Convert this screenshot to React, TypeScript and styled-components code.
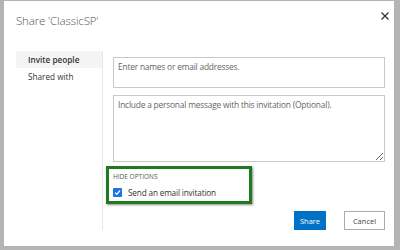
import React, { useState } from "react";
import styled, { createGlobalStyle } from "styled-components";

const GlobalStyle = createGlobalStyle`
  html, body {
    margin: 0;
    padding: 0;
    background: #b4b4b4;
    font-family: "Open Sans", "Liberation Sans", sans-serif;
  }
`;

const Page = styled.div`
  width: 400px;
  height: 250px;
  padding: 1px 7px 4px 4px;
  box-sizing: border-box;
  display: flex;
`;

const Dialog = styled.div`
  flex: 1;
  background: #fff;
  display: flex;
  flex-direction: column;
  padding: 0 9px 0 12px;
`;

const Header = styled.div`
  display: flex;
  align-items: center;
  justify-content: space-between;
  height: 38px;
  margin-right: -6px;
`;

const Title = styled.h1`
  margin: 0;
  font-size: 11.5px;
  font-weight: 300;
  color: #555;
  letter-spacing: -0.15px;
`;

const CloseButton = styled.button`
  border: none;
  background: none;
  padding: 0;
  width: 12px;
  height: 12px;
  display: flex;
  align-items: center;
  justify-content: center;
  cursor: pointer;
  margin-top: -8px;
`;

const Body = styled.div`
  display: flex;
  margin-top: 12px;
  height: 179px;
`;

const Nav = styled.nav`
  width: 86px;
  border-right: 1px solid #e6e6e6;
  display: flex;
  flex-direction: column;
`;

const NavItem = styled.div<{ $active?: boolean }>`
  height: 17px;
  display: flex;
  align-items: center;
  padding-left: 12px;
  font-size: 8.2px;
  color: #333;
  font-weight: ${({ $active }) => ($active ? 600 : 400)};
  background: ${({ $active }) => ($active ? "#f4f4f4" : "transparent")};
`;

const Content = styled.div`
  flex: 1;
  padding: 6px 0 0 10px;
  display: flex;
  flex-direction: column;
`;

const NamesInput = styled.input`
  box-sizing: border-box;
  width: 272px;
  height: 31px;
  border: 1px solid #c8c8c8;
  padding: 0 0 13px 4px;
  font-family: inherit;
  font-size: 8.4px;
  letter-spacing: -0.2px;
  color: #333;
  outline: none;
  &::placeholder {
    color: #666;
  }
`;

const Message = styled.textarea`
  box-sizing: border-box;
  width: 272px;
  height: 67px;
  margin-top: 7px;
  border: 1px solid #c8c8c8;
  padding: 3px 4px;
  font-family: inherit;
  font-size: 8.4px;
  letter-spacing: -0.2px;
  color: #333;
  resize: vertical;
  outline: none;
  &::placeholder {
    color: #666;
  }
`;

const Options = styled.div`
  width: 146px;
  height: 38px;
  box-sizing: border-box;
  margin: 4px 0 0 -7px;
  border: 3px solid #1f7a1f;
  box-shadow: 1px 1px 2px rgba(0, 0, 0, 0.45);
  padding: 3px 0 0 4px;
  display: flex;
  flex-direction: column;
`;

const OptionsToggle = styled.div`
  font-size: 6.5px;
  color: #555;
  text-transform: uppercase;
  height: 10px;
  line-height: 10px;
`;

const CheckRow = styled.label`
  display: flex;
  align-items: center;
  gap: 6px;
  margin-top: 5px;
  font-size: 8.2px;
  letter-spacing: -0.15px;
  color: #333;
`;

const Box = styled.span`
  width: 9px;
  height: 9px;
  border-radius: 1px;
  background: #1a73e8;
  display: flex;
  align-items: center;
  justify-content: center;
`;

const Footer = styled.div`
  margin-top: auto;
  display: flex;
  justify-content: flex-end;
  gap: 18px;
  height: 19px;
`;

const Button = styled.button<{ $primary?: boolean }>`
  height: 19px;
  box-sizing: border-box;
  padding: 0;
  width: ${({ $primary }) => ($primary ? "32px" : "41px")};
  font-family: inherit;
  font-size: 7.5px;
  border: 1px solid ${({ $primary }) => ($primary ? "#0072c6" : "#ababab")};
  background: ${({ $primary }) => ($primary ? "#0072c6" : "#fff")};
  color: ${({ $primary }) => ($primary ? "#fff" : "#444")};
  cursor: pointer;
`;

export default function App() {
  const [sendEmail, setSendEmail] = useState(true);
  return (
    <>
      <GlobalStyle />
      <Page>
        <Dialog>
          <Header>
            <Title>Share 'ClassicSP'</Title>
            <CloseButton aria-label="Close">
              <svg width="8" height="8" viewBox="0 0 8 8">
                <path d="M0.5 0.5 L7.5 7.5 M7.5 0.5 L0.5 7.5" stroke="#333" strokeWidth="1.3" />
              </svg>
            </CloseButton>
          </Header>
          <Body>
            <Nav>
              <NavItem $active>Invite people</NavItem>
              <NavItem>Shared with</NavItem>
            </Nav>
            <Content>
              <NamesInput placeholder="Enter names or email addresses." />
              <Message placeholder="Include a personal message with this invitation (Optional)." />
              <Options>
                <OptionsToggle>Hide options</OptionsToggle>
                <CheckRow onClick={() => setSendEmail(!sendEmail)}>
                  <Box>
                    {sendEmail && (
                      <svg width="7" height="7" viewBox="0 0 7 7">
                        <path d="M1 3.6 L2.8 5.3 L6 1.5" stroke="#fff" strokeWidth="1.3" fill="none" />
                      </svg>
                    )}
                  </Box>
                  Send an email invitation
                </CheckRow>
              </Options>
              <Footer>
                <Button $primary>Share</Button>
                <Button>Cancel</Button>
              </Footer>
            </Content>
          </Body>
        </Dialog>
      </Page>
    </>
  );
}
